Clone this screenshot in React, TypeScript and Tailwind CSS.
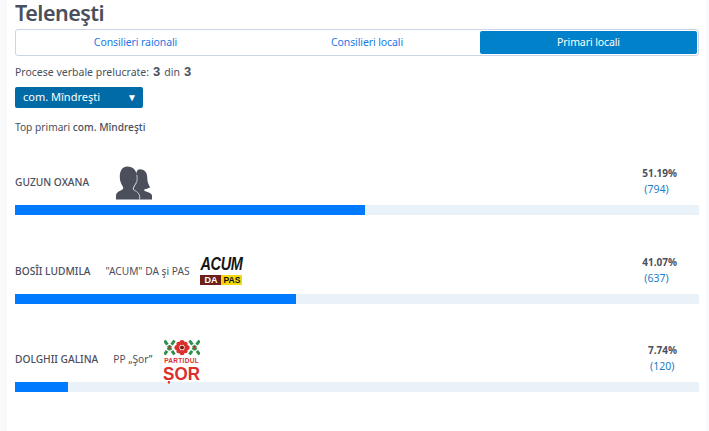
import React from 'react';

const Silhouettes = () => (
    <svg width="36" height="34" viewBox="0 0 38 35" className="block">
        <path d="M25 3c5 0 8 3 8 9 0 4 1 7 3 10-2 1-3 2-6 2v2c3 1 8 2 8 5v4H25v-3c0-3-3-5-6-6v-4c2-3 2-6 2-10 0-5 1-9 4-9z" fill="#4b4f5c" />
        <path d="M12 0c6 0 10 4 10 11 0 4-1 7-3 10-1 2-1 3 0 4 4 2 6 4 6 7v3H0v-4c0-3 3-5 6-6 2-1 2-2 1-4-2-3-3-6-3-10C4 4 7 0 12 0z" fill="#4b4f5c" />
        <path d="M22 9c1 5 0 9-3 12-1 2-1 3 0 4 4 2 6 4 6 7v3" fill="none" stroke="#d5d7dd" strokeWidth="0.9" />
    </svg>
);

const AcumLogo = () => (
    <div className="flex flex-col w-[42px] items-stretch font-['Liberation_Sans',sans-serif]">
        <div className="text-[14.5px] leading-[15px] font-bold italic text-[#161616] text-center tracking-[-0.4px] scale-y-[1.3] origin-bottom">ACUM</div>
        <div className="flex h-[10px] mt-[1px]">
            <div className="w-[21px] bg-[#6e1f1a] text-white text-[9px] leading-[10px] font-bold text-center">DA</div>
            <div className="flex-1 bg-[#f5d90a] text-[#111] text-[8.5px] leading-[10px] font-bold text-center">PAS</div>
        </div>
    </div>
);

const SorLogo = () => (
    <div className="flex flex-col items-center w-[38px] font-['Liberation_Sans',sans-serif]">
        <svg width="36" height="17" viewBox="0 0 36 17" className="block">
            <g stroke="#2f8f4a" strokeWidth="3" strokeDasharray="5 1.4">
                <path d="M0.5 1.5l10 14M10.5 1.5l-10 14" />
                <path d="M25.5 1.5l10 14M35.5 1.5l-10 14" />
            </g>
            <g fill="#d9302c">
                <circle cx="18" cy="3.5" r="2.6" />
                <circle cx="18" cy="13.5" r="2.6" />
                <circle cx="13" cy="8.5" r="2.6" />
                <circle cx="23" cy="8.5" r="2.6" />
                <circle cx="14.5" cy="5" r="2.2" />
                <circle cx="21.5" cy="5" r="2.2" />
                <circle cx="14.5" cy="12" r="2.2" />
                <circle cx="21.5" cy="12" r="2.2" />
            </g>
            <circle cx="18" cy="8.5" r="2" fill="#7d1512" />
            <circle cx="5.5" cy="8.5" r="1.2" fill="#d9302c" />
            <circle cx="30.5" cy="8.5" r="1.2" fill="#d9302c" />
        </svg>
        <div className="text-[6.5px] leading-[7px] font-bold text-[#d9302c] tracking-[0.3px] mt-[1px]">PARTIDUL</div>
        <div className="text-[17px] leading-[17px] font-bold text-[#d9302c] scale-y-[1.12] origin-top">ȘOR</div>
    </div>
);

interface RowProps {
    name: string;
    party?: string;
    logo: React.ReactNode;
    logoLeft: string;
    percent: string;
    votes: string;
    barWidth: string;
    top: string;
}

const Row: React.FC<RowProps> = ({ name, party, logo, logoLeft, percent, votes, barWidth, top }) => (
    <div className={top}>
        <div className="flex items-center h-[41px] pb-[4px]">
            <div className="text-[10.2px] font-medium text-[#4b4f5c] whitespace-nowrap">{name}</div>
            {party && <div className="text-[10.2px] text-[#4b4f5c] whitespace-nowrap ml-[15px]">{party}</div>}
            <div className={logoLeft}>{logo}</div>
            <div className="ml-auto flex flex-col items-start mr-[22px] mb-[3px]">
                <div className="text-[10px] leading-[16px] font-bold text-[#4b4f5c]">{percent}</div>
                <div className="ml-[2px] text-[10.5px] leading-[16px] text-[#1c7cc4]">{votes}</div>
            </div>
        </div>
        <div className="h-[10px] bg-[#e9f1f9]">
            <div className={`h-full bg-[#007bff] ${barWidth}`}></div>
        </div>
    </div>
);

const App: React.FC = () => {
    return (
        <div className="w-[709px] h-[431px] overflow-hidden bg-[#f8f9fa] flex font-['Noto_Sans','Open_Sans',sans-serif]">
            <div className="ml-[7px] w-[699px] h-full bg-white pl-[8px] pr-[7px] text-[#4b4f5c]">
                <h1 className="text-[21.5px] leading-[25px] mb-[4px] font-semibold tracking-[-0.5px] text-[#4b4f5c]">Teleneşti</h1>
                <div className="flex h-[27px] border border-[#ccd5e6] rounded-[3px] p-[1px]">
                    <div className="w-[237px] text-center text-[10.5px] tracking-[-0.1px] leading-[23px] text-[#1a78e6]">Consilieri raionali</div>
                    <div className="w-[226px] text-center text-[10.5px] tracking-[-0.1px] leading-[23px] text-[#1a78e6]">Consilieri locali</div>
                    <div className="flex-1 text-center text-[10.5px] tracking-[-0.1px] leading-[23px] text-white bg-[#0081c9] rounded-[2px]">Primari locali</div>
                </div>
                <div className="flex items-baseline mt-[8px] h-[16px] text-[10.5px] leading-[16px]">
                    <span>Procese verbale prelucrate:</span>
                    <span className="ml-[4px] text-[13px] font-bold font-['Liberation_Sans',sans-serif]">3</span>
                    <span className="ml-[4px]">din</span>
                    <span className="ml-[4px] text-[13px] font-bold font-['Liberation_Sans',sans-serif]">3</span>
                </div>
                <div className="flex items-center justify-between mt-[7px] w-[128px] h-[21px] bg-[#006ba6] rounded-[2px] pl-[8px] pr-[6px] text-white text-[11px]">
                    <span>com. Mîndreşti</span>
                    <span className="text-[10px]">▼</span>
                </div>
                <div className="mt-[11px] text-[10.2px] leading-[16px]">
                    Top primari <span className="font-medium">com. Mîndreşti</span>
                </div>
                <Row name="GUZUN OXANA" logo={<Silhouettes />} logoLeft="ml-[27px]" percent="51.19%" votes="(794)" barWidth="w-[350px]" top="mt-[29px]" />
                <Row name="BOSÎI LUDMILA" party={'"ACUM" DA şi PAS'} logo={<AcumLogo />} logoLeft="ml-[11px]" percent="41.07%" votes="(637)" barWidth="w-[281px]" top="mt-[38px]" />
                <Row name="DOLGHII GALINA" party="PP „Şor”" logo={<SorLogo />} logoLeft="ml-[10px]" percent="7.74%" votes="(120)" barWidth="w-[53px]" top="mt-[37px]" />
            </div>
        </div>
    );
};

export default App;
